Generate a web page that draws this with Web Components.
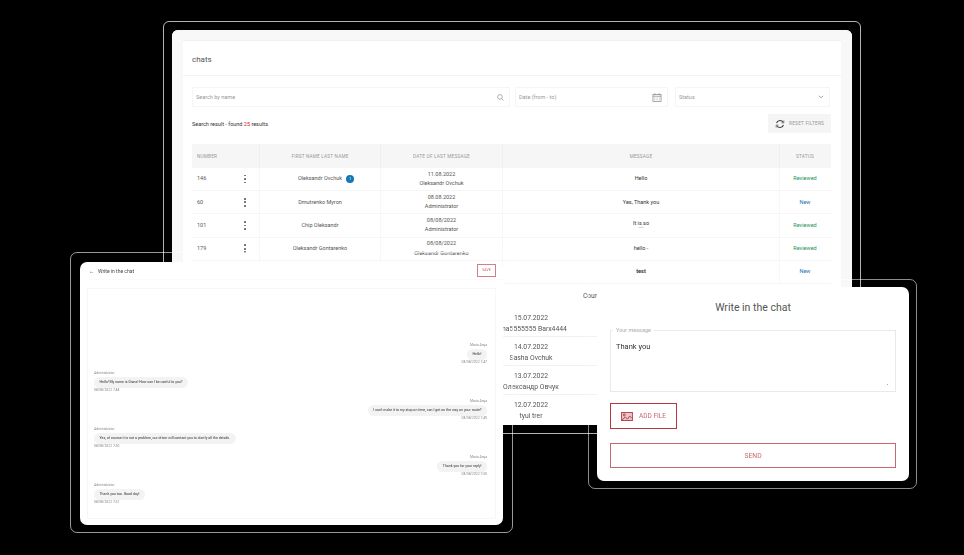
<!doctype html>
<html>
<head>
<meta charset="utf-8">
<style>
  html, body { margin: 0; background: #000; }
  body { width: 964px; height: 555px; overflow: hidden; font-family: Roboto, sans-serif; }
</style>
</head>
<body>
<demo-stage>
  <framed-window style="--x:163px;--y:21px;--w:698px;--h:413px;--pad:8px;--radius:6px;--line:rgba(255,255,255,.7)">
    <chats-list></chats-list>
  </framed-window>
  <framed-window style="--x:70px;--y:252px;--w:443px;--h:281px;--pad:9px 9px 7px 9px;--radius:7px;--line:rgba(255,255,255,.6)">
    <chat-history></chat-history>
  </framed-window>
  <framed-window style="--x:588px;--y:279px;--w:329px;--h:210px;--pad:7px 7px 7px 8px;--radius:7px;--line:rgba(255,255,255,.55)">
    <write-form></write-form>
  </framed-window>
</demo-stage>

<script>
const red = "#b5383f";

class DemoStage extends HTMLElement {
  constructor() {
    super();
    this.attachShadow({ mode: "open" }).innerHTML = `
      <style>
        :host { display: block; position: relative; width: 964px; height: 555px; overflow: hidden; }
      </style>
      <slot></slot>`;
  }
}

// a white card inside a thin outline, placed on the stage
class FramedWindow extends HTMLElement {
  constructor() {
    super();
    this.attachShadow({ mode: "open" }).innerHTML = `
      <style>
        :host {
          display: flex;
          position: absolute;
          left: var(--x); top: var(--y);
          width: var(--w); height: var(--h);
          box-sizing: border-box;
          padding: var(--pad);
          border: 1px solid var(--line);
          border-radius: var(--radius);
        }
        #card {
          flex: 1;
          min-width: 0;
          background: #fff;
          border-radius: var(--radius);
          overflow: hidden;
          display: flex;
          filter: blur(.3px);
        }
      </style>
      <div id="card"><slot></slot></div>`;
  }
}

class SearchField extends HTMLElement {
  constructor() {
    super();
    this.attachShadow({ mode: "open" }).innerHTML = `
      <style>
        :host {
          display: flex; align-items: center; justify-content: space-between;
          height: 20px; box-sizing: border-box; padding: 0 5px 0 3px;
          border: 1px solid #f5f5f5;
          font-size: 5.5px; color: #999;
        }
      </style>
      <slot></slot><slot name="icon"></slot>`;
  }
}

class ChatRow extends HTMLElement {
  constructor() {
    super();
    this.attachShadow({ mode: "open" }).innerHTML = `
      <style>
        :host {
          display: grid;
          grid-template-columns: 68px 121px 122px 277px 50px;
          height: 23.2px; box-sizing: border-box;
          border-bottom: 1px solid #f6f6f6;
          font-size: 5.5px; color: #555;
        }
        div { display: flex; flex-direction: column; align-items: center; justify-content: center; border-right: 1px solid #f7f7f7; line-height: 9.5px; text-align: center; }
        #num { flex-direction: row; justify-content: space-between; padding: 0 13px 0 5px; }
        #status { border-right: 0; }
        #dots { display: flex; flex-direction: column; gap: 1.8px; }
        #dots i { width: 1.7px; height: 1.7px; border-radius: 50%; background: #666; }
        #name { flex-direction: row; gap: 4px; }
        #badge { width: 8px; height: 8px; margin-right: -12px; border-radius: 50%; background: #1276b8; color: #fff; font-size: 4px; line-height: 8px; }
        #msg { color: #333; line-height: 5.5px; }
        small { font-size: 4px; line-height: 4px; color: #555; }
      </style>
      <div id="num"><span id="number"></span><span id="dots"><i></i><i></i><i></i></span></div>
      <div id="name"></div>
      <div id="date"></div>
      <div id="msg"></div>
      <div id="status"></div>`;
  }

  connectedCallback() {
    const s = this.shadowRoot;
    s.getElementById("number").textContent = this.getAttribute("number");
    s.getElementById("name").textContent = this.getAttribute("name");
    if (this.hasAttribute("badge")) {
      const badge = document.createElement("span");
      badge.id = "badge";
      badge.textContent = "1";
      s.getElementById("name").appendChild(badge);
    }
    s.getElementById("date").innerHTML = `<span>${this.getAttribute("date")}</span><span>${this.getAttribute("author")}</span>`;
    s.getElementById("msg").innerHTML = this.getAttribute("message");
    const status = s.getElementById("status");
    status.textContent = this.getAttribute("status");
    status.style.color = this.getAttribute("status") === "New" ? "#1b6fb5" : "#17935a";
  }
}

class ChatsList extends HTMLElement {
  constructor() {
    super();
    this.attachShadow({ mode: "open" }).innerHTML = `
      <style>
        :host { display: block; flex: 1; position: relative; background: #f8f8f8; padding: 10px 11px 0; box-sizing: border-box; }
        #inner { background: #fff; height: 100%; border-top: 1px solid #f1f1f1; box-sizing: border-box; }
        header { height: 35px; box-sizing: border-box; padding: 14px 9px 0; font-size: 8px; color: #555; border-bottom: 1px solid #f3f3f3; }
        #filters { display: grid; grid-template-columns: 318px 153px 157px; column-gap: 5px; padding: 11px 10px 0 9px; }
        #filters search-field:last-child { margin-left: 2px; }
        #result { display: flex; justify-content: space-between; align-items: center; padding: 7px 10px 0 9px; font-size: 5.5px; color: #333; }
        #result b { font-weight: 400; color: #c22; }
        #reset { display: flex; align-items: center; gap: 4px; width: 63px; height: 19px; box-sizing: border-box; padding-left: 7px; background: #f5f5f5; font-size: 4.8px; letter-spacing: .2px; color: #999; }
        #head { display: grid; grid-template-columns: 68px 121px 122px 277px 50px; height: 24px; margin: 11px 10px 0 9px; background: #f6f6f6; font-size: 4.7px; letter-spacing: .2px; color: #999; }
        #head span { display: flex; align-items: center; justify-content: center; border-right: 1px solid #efefef; }
        #head span:first-child { justify-content: flex-start; padding-left: 5px; }
        #head span:last-child { border-right: 0; }
        #rows { margin: 0 10px 0 9px; }
        #big { position: absolute; left: 318px; top: 278px; width: 107px; font-size: 6.8px; color: #555; }
        #big div { height: 29px; box-sizing: border-box; padding: 5px 25px 0 0; line-height: 11px; border-bottom: 1px solid #f2f2f2; white-space: nowrap; text-align: center; }
        #big div:last-child { border-bottom: 0; }
        #big .shift { display: inline-block; margin-left: 7px; }
        #count { position: absolute; left: 411px; top: 262px; font-size: 6.5px; color: #555; }
      </style>
      <div id="inner">
        <header>chats</header>
        <div id="filters">
          <search-field>Search by name
            <svg slot="icon" width="7" height="7" viewBox="0 0 9 9" fill="none" stroke="#999" stroke-width="1"><circle cx="3.8" cy="3.8" r="3"/><path d="M6 6l2.4 2.4"/></svg>
          </search-field>
          <search-field>Date (from - to)
            <svg slot="icon" width="10" height="9" viewBox="0 0 10 10" fill="none" stroke="#888" stroke-width=".8"><rect x=".5" y="1.5" width="9" height="8"/><path d="M.5 3.6h9M2.7.3v2M7.3.3v2M2 5.4h1M4.5 5.4h1M7 5.4h1M2 7.4h1M4.5 7.4h1M7 7.4h1"/></svg>
          </search-field>
          <search-field>Status
            <svg slot="icon" width="6" height="4" viewBox="0 0 7 5" fill="none" stroke="#777" stroke-width=".9"><path d="M1 1l2.5 2.5L6 1"/></svg>
          </search-field>
        </div>
        <div id="result">
          <span>Search result - found <b>25</b> results</span>
          <span id="reset">
            <svg width="10" height="10" viewBox="0 0 11 11" fill="none" stroke="#444" stroke-width="1.2"><path d="M1.7 4.4A4 4 0 0 1 9 3.6M9.3 6.6A4 4 0 0 1 2 7.4"/><path d="M9.7 1.6v2.7H7.2M1.3 9.4V6.7h2.5" stroke-width=".7"/></svg>
            RESET FILTERS
          </span>
        </div>
        <div id="head">
          <span>NUMBER</span><span>FIRST NAME LAST NAME</span><span>DATE OF LAST MESSAGE</span><span>MESSAGE</span><span>STATUS</span>
        </div>
        <div id="rows">
          <chat-row number="146" name="Oleksandr Ovchuk" badge date="11.08.2022" author="Oleksandr Ovchuk" message="Hello" status="Reviewed"></chat-row>
          <chat-row number="60" name="Dmutrenko Myron" date="08.08.2022" author="Administrator" message="Yes, Thank you" status="New"></chat-row>
          <chat-row number="101" name="Chip Oleksandr" date="08/08/2022" author="Administrator" message="<span>It is so</span><small>-----</small>" status="Reviewed"></chat-row>
          <chat-row number="179" name="Oleksandr Gontarenko" date="08/08/2022" author="Oleksandr Gontarenko" message="hello -" status="Reviewed"></chat-row>
          <chat-row number="" name="" date="" author="" message="<b>test</b>" status="New"></chat-row>
        </div>
        <span id="count">Count</span>
        <div id="big">
          <div>15.07.2022<br><span class="shift">na5555555 Barx4444</span></div>
          <div>14.07.2022<br>Sasha Ovchuk</div>
          <div>13.07.2022<br>Олександр Овчук</div>
          <div>12.07.2022<br>tyui trer</div>
        </div>
      </div>`;
  }
}

class ChatBubble extends HTMLElement {
  constructor() {
    super();
    const mine = this.hasAttribute("mine");
    this.attachShadow({ mode: "open" }).innerHTML = `
      <style>
        :host { display: flex; flex-direction: column; align-items: ${mine ? "flex-end" : "flex-start"}; margin-bottom: 6px; }
        small { font-size: 3.4px; line-height: 5px; color: #888; white-space: nowrap; }
        p { margin: .5px 0; padding: 0 5.5px; height: 11px; line-height: 11px; border-radius: 5.5px; background: #f3f3f3; font-size: 3.55px; color: #333; white-space: nowrap; }
      </style>
      <small>${this.getAttribute("who")}</small>
      <p><slot></slot></p>
      <small>${this.getAttribute("when")}</small>`;
  }
}

class ChatHistory extends HTMLElement {
  constructor() {
    super();
    this.attachShadow({ mode: "open" }).innerHTML = `
      <style>
        :host { display: flex; flex-direction: column; flex: 1; padding: 0 7px 6px 7px; box-sizing: border-box; background: #fff; color: #444; }
        header { display: flex; align-items: center; height: 17px; margin: 0 -7px 0 2px; padding-right: 7px; font-size: 5px; border-bottom: 1px solid #fafafa; }
        #back { width: 9px; font-size: 5.5px; }
        #title { flex: 1; }
        #save { width: 19px; height: 13px; box-sizing: border-box; border: 1px solid #cf7f87; color: #c8666e; font-size: 3.5px; line-height: 11px; text-align: center; }
        #box { flex: 1; margin-top: 8px; border: 1px solid #f7f7f7; padding: 54px 8px 0 6px; display: flex; flex-direction: column; box-sizing: border-box; }
      </style>
      <header><span id="back">←</span><span id="title">Write in the chat</span><span id="save">SAVE</span></header>
      <div id="box"><slot></slot></div>`;
  }
}

class WriteForm extends HTMLElement {
  constructor() {
    super();
    this.attachShadow({ mode: "open" }).innerHTML = `
      <style>
        :host { display: flex; flex-direction: column; flex: 1; padding: 0 13px; box-sizing: border-box; background: #fff; }
        h2 { margin: 14px 0 0; height: 14px; line-height: 14px; font-size: 10.5px; font-weight: 400; text-align: center; color: #555; }
        fieldset { margin: 13px 0 0; padding: 10px 5px 0; height: 64px; box-sizing: border-box; border: 1px solid #e9e9e9; font-size: 7.5px; color: #333; position: relative; }
        legend { padding: 0 3px; margin-left: -3px; font-size: 5.5px; line-height: 4px; color: #aaa; }
        #grip { position: absolute; right: 7px; top: 52px; width: 1px; height: 1px; background: #aaa; }
        button { font: inherit; background: #fff; display: flex; align-items: center; justify-content: center; padding: 0; }
        #add { margin-top: 11px; width: 67px; height: 26px; gap: 6px; border: 1px solid ${red}; color: #c56a6f; font-size: 6.5px; }
        #send { margin-top: 14px; height: 25px; border: 1px solid #c8686e; color: #c56a6f; font-size: 6.8px; }
      </style>
      <h2>Write in the chat</h2>
      <fieldset><legend>Your message</legend>Thank you<span id="grip"></span></fieldset>
      <button id="add">
        <svg width="12" height="9" viewBox="0 0 13 10" fill="none" stroke="${red}" stroke-width="1"><rect x=".5" y=".5" width="12" height="9" fill="#e9c6c8"/><circle cx="3.5" cy="3.2" r="1.1"/><path d="M1 9l3.5-3.5L7 8l2.5-3.5L12 7"/></svg>
        ADD FILE
      </button>
      <button id="send">SEND</button>`;
  }
}

customElements.define("demo-stage", DemoStage);
customElements.define("framed-window", FramedWindow);
customElements.define("search-field", SearchField);
customElements.define("chat-row", ChatRow);
customElements.define("chats-list", ChatsList);
customElements.define("chat-bubble", ChatBubble);
customElements.define("chat-history", ChatHistory);
customElements.define("write-form", WriteForm);

document.querySelector("chat-history").innerHTML = `
  <chat-bubble mine who="Maria Anya" when="08/08/2022 7:47">Hello!</chat-bubble>
  <chat-bubble who="Administrator" when="08/08/2022 7:48">Hello! My name is Diana! How can I be useful to you?</chat-bubble>
  <chat-bubble mine who="Maria Anya" when="08/08/2022 7:49">I can't make it to my stop on time, can I get on the way on your route?</chat-bubble>
  <chat-bubble who="Administrator" when="08/08/2022 7:50">Yes, of course it is not a problem, our driver will contact you to clarify all the details.</chat-bubble>
  <chat-bubble mine who="Maria Anya" when="08/08/2022 7:50">Thank you for your reply!</chat-bubble>
  <chat-bubble who="Administrator" when="08/08/2022 7:51">Thank you too. Good day!</chat-bubble>`;
</script>
</body>
</html>
